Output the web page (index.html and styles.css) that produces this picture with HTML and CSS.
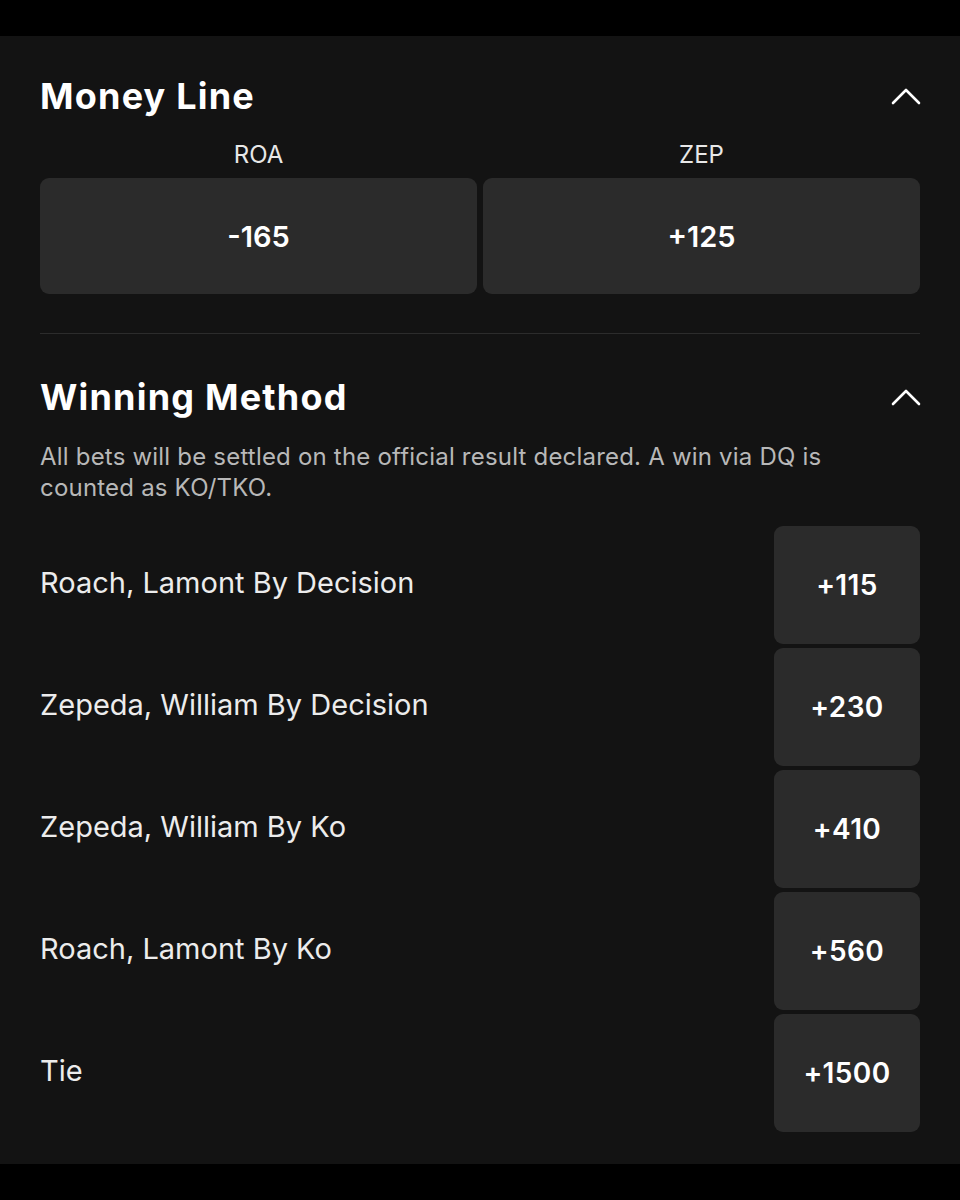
FILE: index.html
```html
<!DOCTYPE html>
<html>
<head>
<meta charset="utf-8">
<link rel="stylesheet" href="styles.css">
</head>
<body>
<div class="topbar"></div>
<main class="panel">
  <section class="market">
    <div class="market-head">
      <h2 class="market-title">Money Line</h2>
      <svg class="chev" width="30" height="18" viewBox="0 0 30 18"><path d="M2 16 L15 3 L28 16" fill="none" stroke="#fff" stroke-width="2.6" stroke-linecap="round" stroke-linejoin="round"/></svg>
    </div>
    <div class="ml-grid">
      <div class="ml-col">
        <div class="ml-label">ROA</div>
        <div class="odds-btn ml-btn">-165</div>
      </div>
      <div class="ml-col">
        <div class="ml-label">ZEP</div>
        <div class="odds-btn ml-btn">+125</div>
      </div>
    </div>
  </section>
  <hr class="divider">
  <section class="market market-wm">
    <div class="market-head">
      <h2 class="market-title">Winning Method</h2>
      <svg class="chev" width="30" height="18" viewBox="0 0 30 18"><path d="M2 16 L15 3 L28 16" fill="none" stroke="#fff" stroke-width="2.6" stroke-linecap="round" stroke-linejoin="round"/></svg>
    </div>
    <p class="desc">All bets will be settled on the official result declared. A win via DQ is counted as KO/TKO.</p>
    <div class="rows">
      <div class="row"><span class="row-label">Roach, Lamont By Decision</span><div class="odds-btn row-btn">+115</div></div>
      <div class="row"><span class="row-label">Zepeda, William By Decision</span><div class="odds-btn row-btn">+230</div></div>
      <div class="row"><span class="row-label">Zepeda, William By Ko</span><div class="odds-btn row-btn">+410</div></div>
      <div class="row"><span class="row-label">Roach, Lamont By Ko</span><div class="odds-btn row-btn">+560</div></div>
      <div class="row"><span class="row-label">Tie</span><div class="odds-btn row-btn">+1500</div></div>
    </div>
  </section>
</main>
</body>
</html>
```
FILE: styles.css
```css
* { box-sizing: border-box; }
html, body {
  margin: 0;
  padding: 0;
  background: #000;
  font-family: Inter, "Noto Sans", "Liberation Sans", sans-serif;
  color: #fff;
}
.topbar { height: 36px; background: #000; }
.panel {
  background: #131313;
  padding: 38px 40px 32px;
}
.market-head {
  display: flex;
  align-items: center;
  justify-content: space-between;
  height: 44px;
}
.market-title {
  margin: 0;
  font-size: 36px;
  line-height: 44px;
  font-weight: 700;
  color: #fff;
  letter-spacing: 1.2px;
}
.chev { display: block; margin-right: -1px; }
.ml-grid {
  display: grid;
  grid-template-columns: 1fr 1fr;
  column-gap: 6px;
  margin-top: 23px;
}
.ml-col { display: flex; flex-direction: column; }
.ml-label {
  text-align: center;
  font-size: 24px;
  line-height: 28px;
  color: #e8e8e8;
  margin-bottom: 9px;
}
.odds-btn {
  background: #2b2b2b;
  border-radius: 9px;
  display: flex;
  align-items: center;
  justify-content: center;
  font-weight: 600;
  color: #fff;
}
.ml-btn {
  height: 116px;
  font-size: 29px;
}
.divider {
  border: 0;
  height: 1px;
  background: #2c2c2c;
  margin: 39px 0 41px;
}
.desc {
  margin: 22px 0 0;
  max-width: 850px;
  font-size: 24px;
  line-height: 31px;
  letter-spacing: 0.2px;
  color: #b8b8b8;
}
.rows {
  margin-top: 23px;
  display: flex;
  flex-direction: column;
  gap: 4px;
}
.row {
  display: flex;
  align-items: center;
  justify-content: space-between;
  height: 118px;
}
.row-label {
  font-size: 29px;
  color: #ececec;
  margin-top: -5px;
}
.row-btn {
  width: 146px;
  height: 118px;
  font-size: 28px;
  letter-spacing: 0.4px;
}
```
